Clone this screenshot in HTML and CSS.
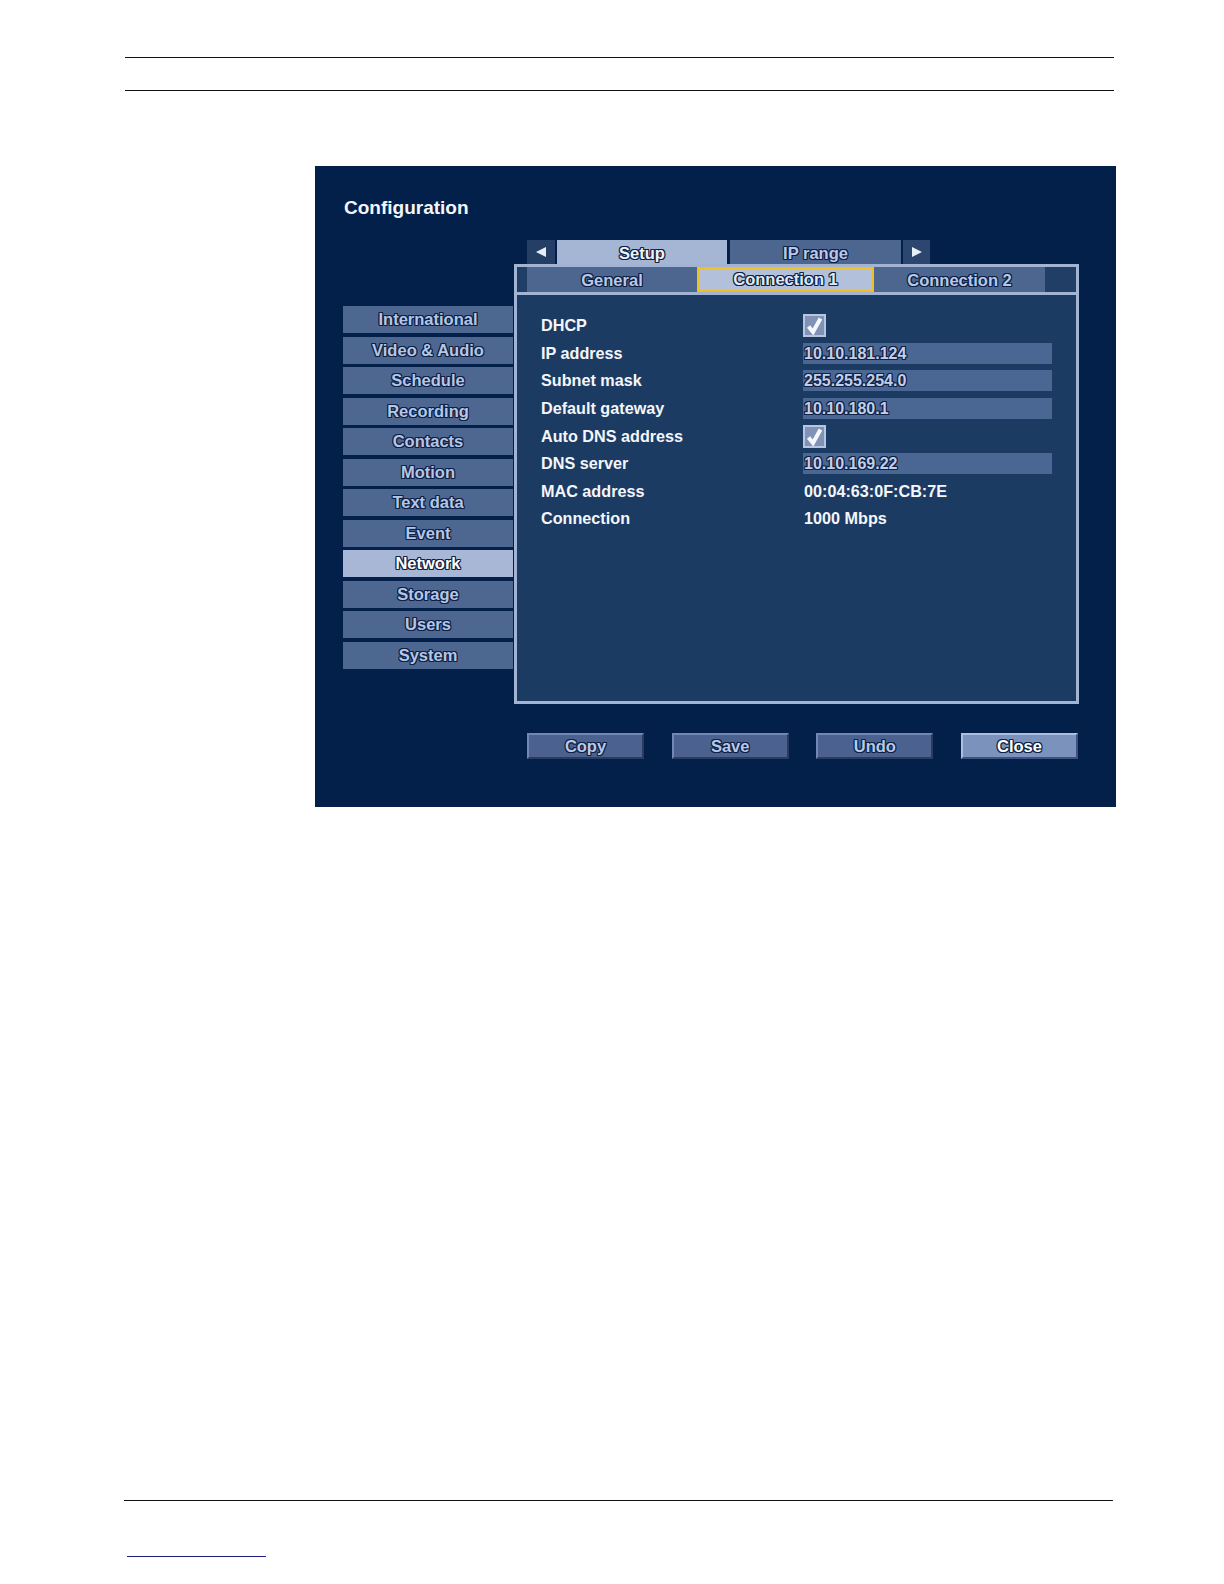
FILE: index.html
```html
<!DOCTYPE html>
<html lang="en">
<head>
<meta charset="utf-8">
<title>Configuration</title>
<link rel="stylesheet" href="styles.css">
</head>
<body>
<div class="page">
  <div class="header-band"></div>

  <div class="screen">
    <div class="title">Configuration</div>

    <div class="top-tabs">
      <div class="arrow"><svg width="12" height="12" viewBox="0 0 12 12"><polygon points="11,1 11,11 1,6" fill="#e8eef8"/></svg></div>
      <div class="tab tab-active">Setup</div>
      <div class="tab">IP range</div>
      <div class="arrow"><svg width="12" height="12" viewBox="0 0 12 12"><polygon points="1,1 1,11 11,6" fill="#e8eef8"/></svg></div>
    </div>

    <div class="body">
      <nav class="sidebar">
        <div class="side-item">International</div>
        <div class="side-item">Video &amp; Audio</div>
        <div class="side-item">Schedule</div>
        <div class="side-item">Recording</div>
        <div class="side-item">Contacts</div>
        <div class="side-item">Motion</div>
        <div class="side-item">Text data</div>
        <div class="side-item">Event</div>
        <div class="side-item side-active">Network</div>
        <div class="side-item">Storage</div>
        <div class="side-item">Users</div>
        <div class="side-item">System</div>
      </nav>

      <section class="panel">
        <div class="subtabs">
          <div class="subtab">General</div>
          <div class="subtab subtab-active">Connection 1</div>
          <div class="subtab">Connection 2</div>
        </div>
        <div class="content">
          <div class="form">
            <div class="label">DHCP</div>
            <div class="value"><span class="check"><svg width="19" height="19" viewBox="0 0 19 19"><path d="M3.5 10.5 L8 16 L15.5 2.5" fill="none" stroke="#f4f7fb" stroke-width="4" stroke-linejoin="miter" stroke-linecap="butt"/></svg></span></div>

            <div class="label">IP address</div>
            <div class="value"><span class="field">10.10.181.124</span></div>

            <div class="label">Subnet mask</div>
            <div class="value"><span class="field">255.255.254.0</span></div>

            <div class="label">Default gateway</div>
            <div class="value"><span class="field">10.10.180.1</span></div>

            <div class="label">Auto DNS address</div>
            <div class="value"><span class="check"><svg width="19" height="19" viewBox="0 0 19 19"><path d="M3.5 10.5 L8 16 L15.5 2.5" fill="none" stroke="#f4f7fb" stroke-width="4" stroke-linejoin="miter" stroke-linecap="butt"/></svg></span></div>

            <div class="label">DNS server</div>
            <div class="value"><span class="field">10.10.169.22</span></div>

            <div class="label">MAC address</div>
            <div class="value plain">00:04:63:0F:CB:7E</div>

            <div class="label">Connection</div>
            <div class="value plain">1000 Mbps</div>
          </div>
        </div>
      </section>
    </div>

    <div class="actions">
      <div class="btn">Copy</div>
      <div class="btn">Save</div>
      <div class="btn">Undo</div>
      <div class="btn btn-active">Close</div>
    </div>
  </div>

  <div class="footer-line"></div>
  <div class="footer-link"></div>
</div>
</body>
</html>
```

FILE: styles.css
```css
html, body {
  margin: 0;
  padding: 0;
  background: #ffffff;
}

.page {
  width: 1224px;
  height: 1584px;
  box-sizing: border-box;
  padding-top: 57px;
  overflow: hidden;
  font-family: "Liberation Sans", Arial, sans-serif;
}

.header-band {
  margin-left: 125px;
  width: 989px;
  height: 32px;
  border-top: 1.5px solid #111;
  border-bottom: 1.5px solid #111;
}

.screen {
  margin: 75px 0 0 315px;
  width: 801px;
  height: 641px;
  box-sizing: border-box;
  background: #022049;
  padding: 0 0 0 28px;
  display: flex;
  flex-direction: column;
}

.title {
  margin: 31px 0 0 1px;
  height: 43px;
  color: #f4f6fa;
  font-weight: bold;
  font-size: 19px;
  line-height: 22px;
}

.tab, .subtab, .side-item, .btn, .field {
  text-shadow:
    1px 0 #0d2146, -1px 0 #0d2146, 0 1px #0d2146, 0 -1px #0d2146,
    1px 1px #0d2146, -1px -1px #0d2146, 1px -1px #0d2146, -1px 1px #0d2146;
}

.top-tabs {
  margin-left: 184px;
  display: flex;
  height: 24px;
}

.arrow {
  width: 28px;
  height: 24px;
  background: #243e66;
  display: flex;
  align-items: center;
  justify-content: center;
}

.top-tabs .arrow:first-child { margin-right: 2px; }
.top-tabs .arrow:last-child { margin-left: 2px; width: 27px; background: #2c4670; }

.tab {
  width: 170px;
  height: 24px;
  background: #4c6690;
  color: #b9c8e6;
  font-weight: bold;
  font-size: 16.5px;
  line-height: 26px;
  text-align: center;
}

.tab + .tab { margin-left: 3px; width: 171px; }

.tab-active {
  background: #a5b5d4;
  color: #eef2fa;
}

.body {
  display: flex;
  align-items: flex-start;
}

.sidebar {
  width: 170px;
  margin-top: 42px;
  display: flex;
  flex-direction: column;
  gap: 3.55px;
}

.side-item {
  height: 27px;
  background: #4e6790;
  color: #b6c6e4;
  font-weight: bold;
  font-size: 16.5px;
  line-height: 27px;
  text-align: center;
}

.side-active {
  background: #a8b7d5;
  color: #ffffff;
}

.panel {
  margin-left: 1px;
  width: 565px;
  height: 440px;
  box-sizing: border-box;
  border: 3px solid #a3b3d3;
  background: #1c3b63;
  display: flex;
  flex-direction: column;
}

.subtabs {
  display: flex;
  height: 25px;
  padding: 0 30px 0 10px;
  background: #213e66;
  border-bottom: 3px solid #a3b3d3;
}

.subtab {
  width: 170px;
  height: 25px;
  background: #4c6690;
  color: #b9c8e6;
  font-weight: bold;
  font-size: 16.5px;
  line-height: 26px;
  text-align: center;
}

.subtab:last-child { width: 171px; }

.subtab-active {
  width: 177px;
  box-sizing: border-box;
  background: #b2c0dc;
  color: #e2e9f6;
  border: 2.5px solid #f0c020;
  line-height: 21px;
}

.content {
  padding: 17px 0 0 24px;
}

.form {
  display: grid;
  grid-template-columns: 262px 249px;
  grid-auto-rows: 27.57px;
  align-items: center;
}

.label {
  color: #f4f6fa;
  font-weight: bold;
  font-size: 16.2px;
}

.value {
  display: flex;
  align-items: center;
}

.value.plain {
  color: #f4f6fa;
  font-weight: bold;
  font-size: 16.2px;
  padding-left: 1px;
}

.check {
  width: 23px;
  height: 23px;
  box-sizing: border-box;
  background: #8092b6;
  border: 2px solid #b8c5de;
  display: flex;
  align-items: center;
  justify-content: center;
}

.field {
  width: 249px;
  height: 21px;
  background: #4a6793;
  color: #c3cfe7;
  font-weight: bold;
  font-size: 16px;
  line-height: 21px;
  padding-left: 1px;
  box-sizing: border-box;
}

.actions {
  margin: 29px 0 0 184px;
  width: 551px;
  display: flex;
  justify-content: space-between;
}

.btn {
  width: 117px;
  height: 26px;
  box-sizing: border-box;
  background: #4b6290;
  border-top: 2px solid #7288b2;
  border-left: 2px solid #7288b2;
  border-right: 2px solid #2a3c60;
  border-bottom: 2px solid #2a3c60;
  color: #b9c8e6;
  font-weight: bold;
  font-size: 16.5px;
  line-height: 23px;
  text-align: center;
}

.btn-active {
  background: #7b92bc;
  border-top-color: #aebfdd;
  border-left-color: #aebfdd;
  border-right-color: #3d5280;
  border-bottom-color: #3d5280;
  color: #ffffff;
}

.footer-line {
  margin: 693px 0 0 124px;
  width: 989px;
  height: 0;
  border-top: 1.5px solid #111;
}

.footer-link {
  margin: 55px 0 0 127px;
  width: 139px;
  height: 0;
  border-top: 1.5px solid #1c1c80;
}
```
